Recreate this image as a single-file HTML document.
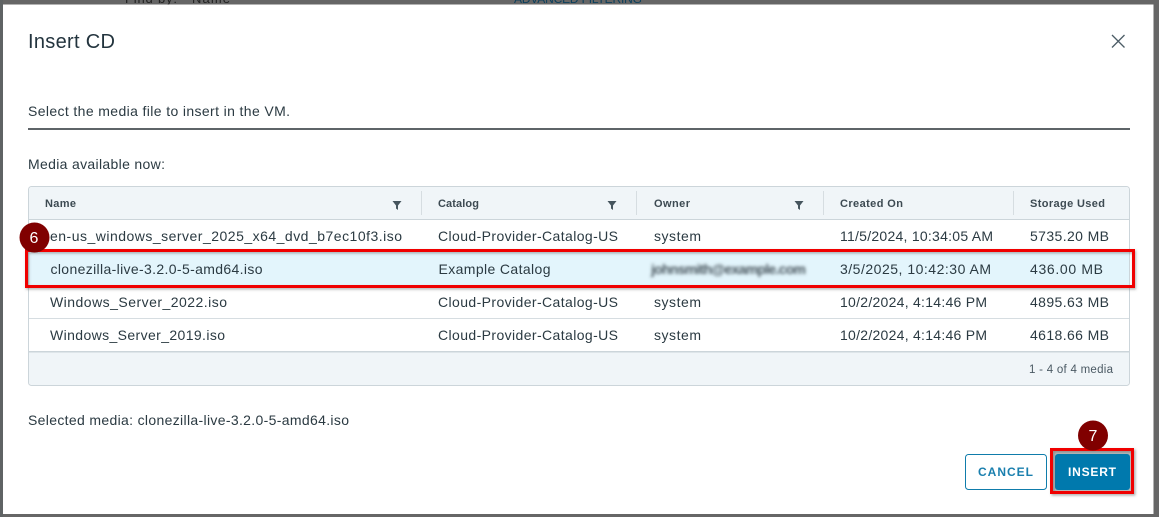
<!DOCTYPE html>
<html><head><meta charset="utf-8"><title>Insert CD</title>
<style>
html,body{margin:0;padding:0;background:#666;width:1159px;height:517px;overflow:hidden}
svg{display:block;position:absolute;left:0;top:0}
text{font-family:"Liberation Sans",sans-serif;font-size:14px;fill:#2b3a42}
.h{font-size:11px;font-weight:bold;fill:#3d4a52}
</style></head><body>
<svg width="1159" height="517" viewBox="0 0 1159 517" xmlns="http://www.w3.org/2000/svg">
<defs>
<filter id="b" x="-10%" y="-50%" width="120%" height="200%"><feGaussianBlur stdDeviation="1.5"/></filter>
<filter id="s" x="-5%" y="-20%" width="110%" height="140%"><feGaussianBlur stdDeviation="1.2"/></filter>
</defs>
<rect width="1159" height="517" fill="#666"/>
<rect x="0" y="0" width="3" height="517" fill="#5f6364"/>
<text x="125" y="3" style="fill:#222;font-size:13px" textLength="52">Find by:</text>
<text x="192" y="3" style="fill:#222;font-size:13px" textLength="38">Name</text>
<text x="514" y="3" style="fill:#0a3f5c;font-size:12px" textLength="128">ADVANCED FILTERING</text>
<rect x="3" y="4.500" width="1150.500" height="509.500" fill="#fff"/>

<text x="28" y="48" style="font-size:20px;fill:#23343e" textLength="87">Insert CD</text>
<path d="M1112 35 L1124.500 47.500 M1124.500 35 L1112 47.500" stroke="#4c5c66" stroke-width="1.300" fill="none"/>
<text x="28" y="116" textLength="262">Select the media file to insert in the VM.</text>
<rect x="28" y="128" width="1102" height="2" fill="#5e6468"/>
<text x="28" y="169" textLength="137">Media available now:</text>

<rect x="28.500" y="186.500" width="1101" height="199" rx="3" fill="#fff" stroke="#ccd5da"/>
<path d="M29 219.500 V190 a3 3 0 0 1 3-3 H1126 a3 3 0 0 1 3 3 V219.500 Z" fill="#f0f5f8"/>
<rect x="29" y="219" width="1100" height="1" fill="#ccd5da"/>
<rect x="421" y="191" width="1" height="24" fill="#d6dde1"/>
<rect x="636" y="191" width="1" height="24" fill="#d6dde1"/>
<rect x="823" y="191" width="1" height="24" fill="#d6dde1"/>
<rect x="1013" y="191" width="1" height="24" fill="#d6dde1"/>
<text class="h" x="45" y="207" textLength="31">Name</text>
<text class="h" x="438" y="207" textLength="41">Catalog</text>
<text class="h" x="654" y="207" textLength="36">Owner</text>
<text class="h" x="840" y="207" textLength="63">Created On</text>
<text class="h" x="1030" y="207" textLength="75">Storage Used</text>
<path d="M392.500 201 H401.500 L398 205.500 V210 L396 208.500 V205.500 Z" fill="#46555e"/>
<path d="M607.500 201 H616.500 L613 205.500 V210 L611 208.500 V205.500 Z" fill="#46555e"/>
<path d="M794.500 201 H803.500 L800 205.500 V210 L798 208.500 V205.500 Z" fill="#46555e"/>

<text x="50" y="241" textLength="352">en-us_windows_server_2025_x64_dvd_b7ec10f3.iso</text>
<text x="438" y="241" textLength="180">Cloud-Provider-Catalog-US</text>
<text x="654" y="241" textLength="47">system</text>
<text x="840" y="241" textLength="153">11/5/2024, 10:34:05 AM</text>
<text x="1030" y="241" textLength="79">5735.20 MB</text>

<rect x="29" y="252" width="1100" height="33" fill="#e3f5fc"/>
<text x="50.500" y="274" textLength="212">clonezilla-live-3.2.0-5-amd64.iso</text>
<text x="438.500" y="274" textLength="112">Example Catalog</text>
<text x="651" y="274" textLength="155" filter="url(#b)" style="fill:#4a565e;font-weight:bold">johnsmith@example.com</text>
<text x="840" y="274" textLength="151">3/5/2025, 10:42:30 AM</text>
<text x="1030" y="274" textLength="73">436.00 MB</text>

<rect x="29" y="318" width="1100" height="1" fill="#d6dde1"/>
<text x="50" y="307" textLength="177">Windows_Server_2022.iso</text>
<text x="438" y="307" textLength="180">Cloud-Provider-Catalog-US</text>
<text x="654" y="307" textLength="47">system</text>
<text x="840" y="307" textLength="147">10/2/2024, 4:14:46 PM</text>
<text x="1030" y="307" textLength="79">4895.63 MB</text>

<text x="50" y="340" textLength="175">Windows_Server_2019.iso</text>
<text x="438" y="340" textLength="180">Cloud-Provider-Catalog-US</text>
<text x="654" y="340" textLength="47">system</text>
<text x="840" y="340" textLength="147">10/2/2024, 4:14:46 PM</text>
<text x="1030" y="340" textLength="79">4618.66 MB</text>

<path d="M29 352 H1129 V382 a3 3 0 0 1-3 3 H32 a3 3 0 0 1-3-3 Z" fill="#f0f5f8"/>
<rect x="29" y="351" width="1100" height="1.500" fill="#ccd5da"/>
<text x="1029" y="373" style="font-size:11.500px;fill:#4a5963" textLength="84">1 - 4 of 4 media</text>

<text x="28" y="425" textLength="321">Selected media: clonezilla-live-3.2.0-5-amd64.iso</text>

<rect x="965.500" y="454.500" width="81" height="35" rx="3" fill="#fff" stroke="#0f7cab"/>
<text x="978" y="476" style="font-size:12px;font-weight:bold;fill:#1a7fae" textLength="55">CANCEL</text>
<rect x="1052" y="450" width="80" height="42" fill="#b9bcbe"/>
<rect x="1055" y="454" width="75" height="36" rx="3" fill="#0079ad"/>
<text x="1068" y="476" style="font-size:12px;font-weight:bold;fill:#fff" textLength="48">INSERT</text>

<rect x="27.500" y="252" width="1107" height="36" fill="none" stroke="#555" stroke-opacity=".45" stroke-width="3" filter="url(#s)"/>
<rect x="26.500" y="250.500" width="1107" height="36" fill="none" stroke="#f00000" stroke-width="3"/>
<rect x="1053" y="451" width="81" height="43" fill="none" stroke="#555" stroke-opacity=".5" stroke-width="3" filter="url(#s)"/>
<rect x="1051.500" y="449.500" width="81" height="43" fill="none" stroke="#f00000" stroke-width="3"/>

<circle cx="34.500" cy="237.500" r="15" fill="#800000"/>
<text x="34" y="243" text-anchor="middle" style="font-size:16px;fill:#fff">6</text>
<circle cx="1093" cy="435.500" r="15" fill="#800000"/>
<text x="1093" y="441" text-anchor="middle" style="font-size:16px;fill:#fff">7</text>
</svg>
</body></html>
